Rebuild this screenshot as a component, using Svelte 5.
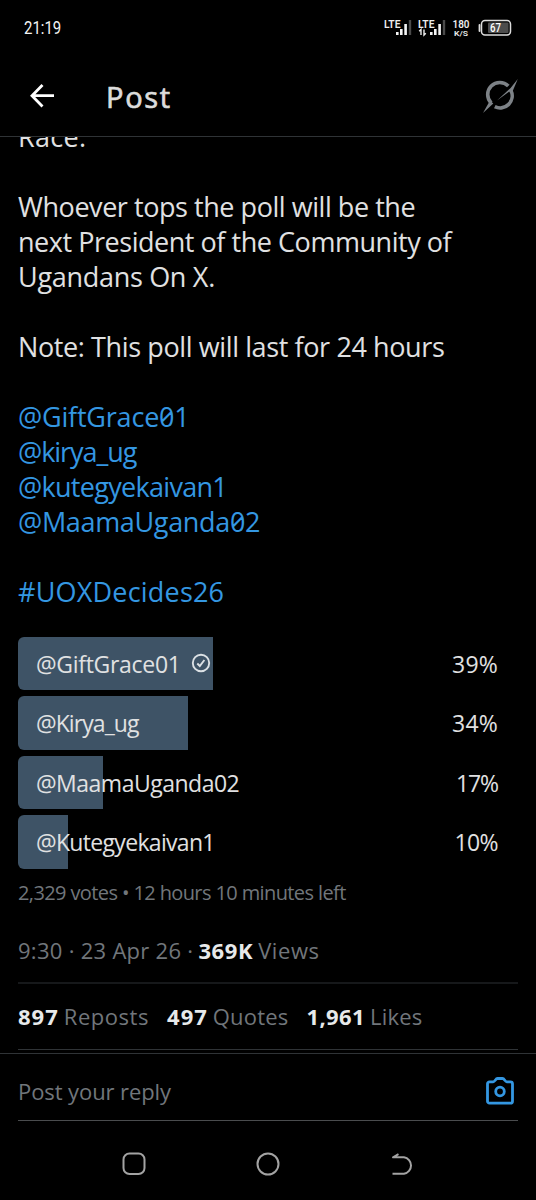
<script>
    // spacing is the letter-spacing in px, an empty text is a blank line
    const lines = [
        { text: 'Race.', spacing: 0.3 },
        { text: '' },
        { text: 'Whoever tops the poll will be the', spacing: -0.45 },
        { text: 'next President of the Community of', spacing: -0.46 },
        { text: 'Ugandans On X.', spacing: -0.3 },
        { text: '' },
        { text: 'Note: This poll will last for 24 hours', spacing: -0.39 },
        { text: '' },
        { text: '@GiftGrace01', spacing: -0.2, link: true },
        { text: '@kirya_ug', spacing: -1.05, link: true },
        { text: '@kutegyekaivan1', spacing: -0.7, link: true },
        { text: '@MaamaUganda02', spacing: -0.33, link: true },
        { text: '' },
        { text: '#UOXDecides26', spacing: 0.2, link: true }
    ];

    const options = [
        { name: '@GiftGrace01', percent: 39, spacing: -0.3, percentSpacing: 0.2, voted: true },
        { name: '@Kirya_ug', percent: 34, spacing: -0.92, percentSpacing: 0.2 },
        { name: '@MaamaUganda02', percent: 17, spacing: -0.5, percentSpacing: -1.1 },
        { name: '@Kutegyekaivan1', percent: 10, spacing: -0.68, percentSpacing: -0.6 }
    ];

    const stats = [
        { count: '897', label: 'Reposts' },
        { count: '497', label: 'Quotes' },
        { count: '1,961', label: 'Likes' }
    ];
</script>

<div class="screen">
    <div class="status">
        <span class="clock">21:19</span>
        <div class="indicators">
            {#each [false, true] as data}
                <svg class="signal" width="29" height="20" viewBox="0 0 29 20">
                    <text x="0" y="9.500" textLength="16.500" lengthAdjust="spacingAndGlyphs">LTE</text>
                    {#if data}
                        <path d="M3 17V11.500l-1.800 1.800M6 11.500V17l1.800-1.800" fill="none" stroke="#eee" stroke-width="1.400" />
                    {/if}
                    <path d="M13.300 14v3M17.300 11v6M21.600 6v11" stroke="#f4f4f4" stroke-width="2.600" />
                    <path d="M26 2v15" stroke="#4a4a4a" stroke-width="2.400" />
                </svg>
            {/each}
            <svg class="speed" width="20" height="20" viewBox="0 0 20 20">
                <text x="0.500" y="9.500" textLength="17" lengthAdjust="spacingAndGlyphs">180</text>
                <text class="unit" x="2" y="17.500" textLength="14" lengthAdjust="spacingAndGlyphs">K/S</text>
            </svg>
            <svg class="battery" width="34" height="18" viewBox="0 0 34 18">
                <path d="M1.500 6v6" stroke="#ddd" stroke-width="1.800" stroke-linecap="round" />
                <rect x="3.500" y="1.500" width="29" height="14.500" rx="3.500" fill="none" stroke="#ddd" stroke-width="1.500" />
                <rect x="10" y="3.500" width="20.500" height="10.500" rx="1" fill="#4c4c4c" />
                <text x="12" y="13" textLength="11" lengthAdjust="spacingAndGlyphs">67</text>
            </svg>
        </div>
    </div>

    <header>
        <svg class="back" width="26" height="26" viewBox="0 0 26 26" fill="none" stroke="#fff" stroke-width="2.800">
            <path d="M13.500 2 3 12.700l10.500 10.700M3.500 12.700H25" />
        </svg>
        <h1>Post</h1>
        <svg class="grok" width="36" height="36" viewBox="0 0 36 36">
            <path d="M9.200 25A12 12 0 0 1 26.300 8" fill="none" stroke="#7d8287" stroke-width="3.600" />
            <path d="M28.900 12.500A12 12 0 0 1 12.800 28.600" fill="none" stroke="#7d8287" stroke-width="3.600" />
            <path d="M15 22.500 28.600 10 35.800 1 30.500 13.500 27 13.800ZM1 35 8 22.500 11.300 25.400Z" fill="#7d8287" />
        </svg>
    </header>

    <main>
        <div class="body">
            {#each lines as line}
                <p class:link={line.link} style:letter-spacing="{line.spacing ?? 0}px">{line.text}</p>
            {/each}
        </div>

        <div class="poll">
            {#each options as option}
                <div class="option">
                    <div class="bar" style:width="{option.percent}%"></div>
                    <span class="name" style:letter-spacing="{option.spacing}px">{option.name}</span>
                    {#if option.voted}
                        <svg class="check" width="20" height="20" viewBox="0 0 20 20" fill="none" stroke="#dce1e5" stroke-width="1.900">
                            <circle cx="10" cy="10" r="8.200" />
                            <path d="m6.300 10.500 2.500 2.500 4.600-6" />
                        </svg>
                    {/if}
                    <span class="percent" style:letter-spacing="{option.percentSpacing}px">{option.percent}%</span>
                </div>
            {/each}
        </div>

        <div class="votes">2,329 votes • 12 hours 10 minutes left</div>
        <div class="meta"><span class="date">9:30 · 23 Apr 26 ·</span><b>369K</b><span>Views</span></div>
        <div class="stats">
            {#each stats as stat}
                <div class={stat.label.toLowerCase()}><b>{stat.count}</b><span>{stat.label}</span></div>
            {/each}
        </div>
    </main>

    <footer>
        <div class="reply">
            <span>Post your reply</span>
            <svg width="30" height="30" viewBox="0 0 30 30" fill="none" stroke="#3497e2" stroke-width="2.800">
                <path d="M4.500 5.800h3.700C10 5.800 10.500 2.500 12.500 2.500h5c2 0 2.500 3.300 4.300 3.300h3.700a2 2 0 0 1 2 2v17.400a2 2 0 0 1-2 2h-21a2 2 0 0 1-2-2V7.800a2 2 0 0 1 2-2Z" />
                <circle cx="15" cy="15.500" r="4.300" />
            </svg>
        </div>
    </footer>

    <nav>
        <svg width="24" height="24" viewBox="0 0 24 24"><rect x="1.500" y="1.500" width="21" height="20.500" rx="6" /></svg>
        <svg width="24" height="24" viewBox="0 0 24 24"><circle cx="12" cy="12" r="10.500" /></svg>
        <svg width="24" height="24" viewBox="0 0 24 24"><path d="M8.500 2.200 3 5.300H14a8.300 8.300 0 0 1 0 16.400H2.500" /></svg>
    </nav>
</div>

<style>
    :global(body) {
        margin: 0;
        background: #000;
    }

    .screen {
        width: 536px;
        height: 1200px;
        display: flex;
        flex-direction: column;
        overflow: hidden;
        background: #000;
        color: #e0e1e2;
        font-family: "Open Sans", sans-serif;
    }

    svg {
        display: block;
        flex-shrink: 0;
    }

    p, h1 {
        margin: 0;
        font-weight: 400;
    }

    .status {
        height: 56px;
        box-sizing: border-box;
        padding: 0 24px;
        display: flex;
        justify-content: space-between;
        align-items: center;
    }

    .clock {
        font: 400 18px/20px Roboto, sans-serif;
        color: #f4f4f4;
        transform: scaleX(0.83);
        transform-origin: left;
    }

    .indicators {
        display: flex;
        align-items: center;
    }

    .signal {
        margin-right: 5px;
    }

    .signal text {
        font: 600 11px Roboto, sans-serif;
        fill: #eee;
    }

    .speed {
        margin: 0 6px 0 0;
    }

    .speed text {
        font: 600 11px Roboto, sans-serif;
        fill: #eee;
    }

    .speed .unit {
        font-size: 8px;
    }

    .battery text {
        font: 500 12px Roboto, sans-serif;
        fill: #fff;
    }

    header {
        height: 81px;
        box-sizing: border-box;
        padding: 0 18px 0 29px;
        display: flex;
        align-items: center;
        border-bottom: 1px solid #2f3336;
    }

    h1 {
        margin: 2px 0 0 51px;
        flex: 1;
        font-size: 29px;
        line-height: 36px;
        letter-spacing: 1.7px;
        -webkit-text-stroke: 0.7px #dcdcdc;
        color: #dcdcdc;
    }

    main {
        height: 916px;
        box-sizing: border-box;
        padding: 0 18px;
        overflow: hidden;
        display: flex;
        flex-direction: column;
    }

    .body {
        margin-top: -18px;
    }

    .body p {
        height: 35px;
        font-size: 27px;
        line-height: 35px;
        white-space: nowrap;
    }

    .body .link {
        color: #3497e2;
        font-feature-settings: "zero";
    }

    .poll {
        margin-top: 27.5px;
        display: flex;
        flex-direction: column;
        gap: 6px;
    }

    .option {
        position: relative;
        height: 53.5px;
        box-sizing: border-box;
        padding: 1px 20px 0 18px;
        display: flex;
        align-items: center;
        font-size: 23px;
    }

    .bar {
        position: absolute;
        inset: 0 auto 0 0;
        background: #3e5366;
        border-radius: 6px 0 0 6px;
    }

    .name, .check, .percent {
        position: relative;
    }

    .check {
        margin: -2px 0 0 10px;
    }

    .percent {
        margin-left: auto;
    }

    .votes {
        margin-top: 10px;
        font-size: 20px;
        line-height: 28px;
        letter-spacing: -0.61px;
        color: #71767b;
        white-space: nowrap;
    }

    .meta {
        margin-top: 28px;
        height: 47px;
        display: flex;
        gap: 5px;
        font-size: 22px;
        line-height: 30px;
        color: #71767b;
        border-bottom: 2px solid #16181a;
    }

    .date {
        letter-spacing: 0.28px;
    }

    b {
        color: #e7e9ea;
    }

    .meta b, .meta span:last-child {
        letter-spacing: 0.6px;
    }

    .stats {
        height: 65px;
        display: flex;
        align-items: center;
        gap: 18px;
        font-size: 22px;
        color: #71767b;
        border-bottom: 1px solid #2f3336;
    }

    .stats div {
        display: flex;
        gap: 5px;
    }

    .stats b {
        letter-spacing: 1px;
    }

    .stats span {
        letter-spacing: 0.55px;
    }

    .stats .quotes span {
        letter-spacing: 0.19px;
    }

    .stats .likes b {
        letter-spacing: 0.4px;
    }

    .stats .likes span {
        letter-spacing: 0.2px;
    }

    footer {
        height: 68px;
        box-sizing: border-box;
        padding: 0 18px;
        border-top: 1px solid #2f3336;
    }

    .reply {
        height: 58px;
        padding: 8px 3px 0 0;
        display: flex;
        justify-content: space-between;
        align-items: center;
        font-size: 22px;
        letter-spacing: -0.09px;
        color: #71767b;
        border-bottom: 1px solid #4a4c4e;
    }

    nav {
        flex: 1;
        padding: 7px 122px 0;
        display: flex;
        justify-content: space-between;
        align-items: center;
    }

    nav svg {
        fill: none;
        stroke: #a3a3a3;
        stroke-width: 2;
        stroke-linejoin: round;
    }
</style>
